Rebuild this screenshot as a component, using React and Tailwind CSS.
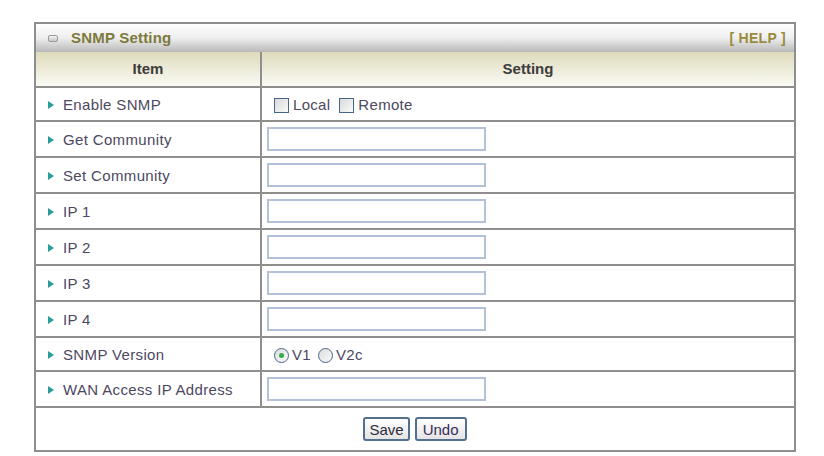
import React from 'react';

const labelFont = { fontFamily: '"Liberation Sans", Arial, sans-serif' };

const Arrow = () => (
  <svg width="6" height="8" viewBox="0 0 6 8" className="shrink-0">
    <path d="M0 0 L6 4 L0 8 Z" fill="#2a9d9b" />
  </svg>
);

const CheckBox = () => (
  <span className="inline-block w-[15px] h-[15px] border border-[#46678a] bg-gradient-to-br from-[#d9d9d9] to-[#fbfbfb] shrink-0" />
);

const Radio = ({ checked }) => (
  <span className="inline-flex items-center justify-center w-[15px] h-[15px] rounded-full border border-[#46678a] bg-gradient-to-br from-[#dcdcdc] to-[#fbfbfb] shrink-0">
    {checked && <span className="w-[5px] h-[5px] rounded-full bg-[#2fae4a]" />}
  </span>
);

const TextInput = () => (
  <div className="w-[219px] h-[24px] border-2 border-[#b3c3d7] bg-white" />
);

const Row = ({ label, children, tall = true }) => (
  <div className={`grid grid-cols-[226px_1fr] border-b-2 border-[#8e8e8e] ${tall ? 'h-[36px]' : 'h-[34px]'}`}>
    <div className="flex items-center gap-[9px] pl-[12px] pt-[2px] border-r-2 border-[#8e8e8e] text-[15px] tracking-[0.35px] text-[#4c4860]">
      <Arrow />
      <span>{label}</span>
    </div>
    <div className="flex items-center pl-[5px] text-[15px] tracking-[0.3px] text-[#4c4860]">{children}</div>
  </div>
);

const App = () => {
  const inputRows = ['Get Community', 'Set Community', 'IP 1', 'IP 2', 'IP 3', 'IP 4'];

  return (
    <div className="w-[824px] h-[456px] bg-white pt-[22px] pl-[34px]" style={labelFont}>
      <div className="w-[762px] border-2 border-[#8e8e8e]">
        <div className="h-[28px] flex items-center justify-between pl-[12px] pr-[8px] bg-gradient-to-b from-[#ffffff] via-[#eeeeee] to-[#b9b9b9]">
          <div className="flex items-center gap-[13px]">
            <span className="inline-block w-[10px] h-[7px] rounded-[2px] border border-[#9a9a9a] bg-gradient-to-b from-[#f4f4f4] to-[#c8c8c8]" />
            <span className="text-[15px] font-bold tracking-[0.2px] text-[#7c7a3c]">SNMP Setting</span>
          </div>
          <span className="text-[14px] font-bold tracking-[0.3px] text-[#9a8a3c]">[ HELP ]</span>
        </div>
        <div className="grid grid-cols-[226px_1fr] h-[36px] border-b-2 border-[#8e8e8e] bg-gradient-to-b from-[#dedabb] to-[#fbfbf5] text-[15px] font-bold text-[#3c3c3c]">
          <div className="flex items-center justify-center border-r-2 border-[#8e8e8e]">Item</div>
          <div className="flex items-center justify-center">Setting</div>
        </div>
        <Row label="Enable SNMP" tall={false}>
          <div className="flex items-center gap-[4px] pl-[7px] pt-[2px]">
            <CheckBox />
            <span>Local</span>
            <span className="w-[1px]" />
            <CheckBox />
            <span>Remote</span>
          </div>
        </Row>
        {inputRows.map((label) => (
          <Row key={label} label={label}>
            <TextInput />
          </Row>
        ))}
        <Row label="SNMP Version" tall={false}>
          <div className="flex items-center gap-[3px] pl-[7px] pt-[2px]">
            <Radio checked />
            <span>V1</span>
            <span className="w-[1px]" />
            <Radio />
            <span>V2c</span>
          </div>
        </Row>
        <Row label="WAN Access IP Address">
          <TextInput />
        </Row>
        <div className="h-[42px] flex items-center justify-center gap-[5px]">
          <button className="h-[24px] px-[4px] rounded-[3px] border-2 border-[#52708f] bg-gradient-to-b from-[#ffffff] to-[#e4e4e4] text-[15px] text-[#2c2c3c] leading-none">
            Save
          </button>
          <button className="h-[24px] px-[6px] rounded-[3px] border-2 border-[#52708f] bg-gradient-to-b from-[#ffffff] to-[#e4e4e4] text-[15px] text-[#3a2c5a] leading-none">
            Undo
          </button>
        </div>
      </div>
    </div>
  );
};

export default App;
